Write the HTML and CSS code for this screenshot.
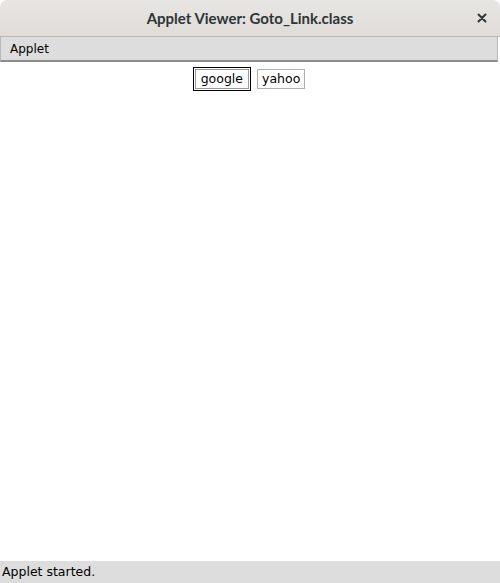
FILE: index.html
```html
<!DOCTYPE html>
<html>
<head>
<meta charset="utf-8">
<title>Applet Viewer: Goto_Link.class</title>
<link rel="stylesheet" href="styles.css">
</head>
<body>
<div class="window">
  <div class="titlebar">
    <span class="title">Applet Viewer: Goto_Link.class</span>
    <span class="close">
      <svg width="10" height="10" viewBox="0 0 10 10"><path d="M1.5 1.5 L8.5 8.5 M8.5 1.5 L1.5 8.5" stroke="#2e3436" stroke-width="2" stroke-linecap="round"/></svg>
    </span>
  </div>
  <div class="menubar"><span class="menu">Applet</span></div>
  <div class="content">
    <div class="buttons">
      <button class="btn focused">google</button>
      <button class="btn">yahoo</button>
    </div>
  </div>
  <div class="status">Applet started.</div>
</div>
</body>
</html>
```
FILE: styles.css
```css
html, body {
  margin: 0;
  padding: 0;
  background: #ffffff;
}
.window {
  width: 500px;
  height: 583px;
  display: flex;
  flex-direction: column;
  font-family: "DejaVu Sans", sans-serif;
  overflow: hidden;
}
.titlebar {
  height: 37px;
  flex: 0 0 37px;
  box-sizing: border-box;
  border-bottom: 1px solid #bfb8b1;
  background: linear-gradient(#e8e6e3, #dfdcd8);
  border-radius: 7px 7px 0 0;
  display: flex;
  align-items: center;
  justify-content: center;
  position: relative;
}
.title {
  font-family: "Lato", "DejaVu Sans", sans-serif;
  font-weight: 700;
  font-size: 15px;
  color: #2e3436;
}
.close {
  position: absolute;
  right: 13px;
  top: 13px;
  width: 10px;
  height: 10px;
  display: flex;
}
.menubar {
  flex: 0 0 25px;
  height: 25px;
  box-sizing: border-box;
  background: #dddddd;
  border-left: 1px solid #b8b8b8;
  border-right: 1px solid #b8b8b8;
  border-bottom: 2px solid #8c8c8c;
  margin-right: 2px;
  display: flex;
  align-items: center;
  padding-left: 9px;
}
.menu {
  font-size: 12px;
  color: #000;
}
.content {
  flex: 1;
  background: #fff;
}
.buttons {
  display: flex;
  justify-content: center;
  align-items: center;
  gap: 8px;
  padding-top: 7px;
  margin-left: 0;
}
.btn {
  font-family: "DejaVu Sans", sans-serif;
  font-size: 12.5px;
  background: #fff;
  color: #000;
  border: 1px solid #b0b0b0;
  padding: 0 4px;
  height: 20px;
  margin: 0;
  line-height: 18px;
}
.btn.focused {
  outline: 1px solid #000;
  outline-offset: 1px;
  border-color: #9a9a9a;
  padding: 0 5px;
}
.status {
  flex: 0 0 22px;
  height: 22px;
  background: #dddddd;
  font-size: 12.5px;
  line-height: 22px;
  padding-left: 2px;
  color: #000;
}
```
